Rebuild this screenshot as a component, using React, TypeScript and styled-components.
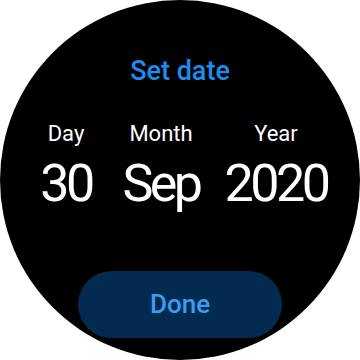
import React from "react";
import styled, { createGlobalStyle } from "styled-components";

const GlobalStyle = createGlobalStyle`
  html, body {
    margin: 0;
    padding: 0;
    background: #fff;
  }
  body {
    font-family: Roboto, "Noto Sans", sans-serif;
  }
`;

type Field = { label: string; value: string; width: number };

const fields: Field[] = [
  { label: "Day", value: "30", width: 80 },
  { label: "Month", value: "Sep", width: 110 },
  { label: "Year", value: "2020", width: 120 },
];

export default function App() {
  return (
    <>
      <GlobalStyle />
      <Watch>
        <Title>Set date</Title>
        <Picker>
          {fields.map((f) => (
            <Column key={f.label} $width={f.width}>
              <Label>{f.label}</Label>
              <Value>{f.value}</Value>
            </Column>
          ))}
        </Picker>
        <DoneButton>Done</DoneButton>
      </Watch>
    </>
  );
}

const Watch = styled.div`
  width: 360px;
  height: 360px;
  border-radius: 50%;
  background: #000;
  overflow: hidden;
  display: flex;
  flex-direction: column;
  align-items: center;
  box-sizing: border-box;
  padding-top: 54px;
`;

const Title = styled.div`
  color: #1b8cf0;
  font-size: 27px;
  font-weight: 500;
  line-height: 34px;
`;

const Picker = styled.div`
  display: flex;
  justify-content: center;
  margin-top: 31px;
  padding-left: 2px;
`;

const Column = styled.div<{ $width: number }>`
  width: ${(p) => p.$width}px;
  display: flex;
  flex-direction: column;
  align-items: center;
`;

const Label = styled.div`
  color: #fff;
  font-size: 22px;
  line-height: 30px;
`;

const Value = styled.div`
  color: #fff;
  font-size: 52px;
  line-height: 62px;
  letter-spacing: -3.5px;
  margin-top: 4px;
`;

const DoneButton = styled.button`
  margin-top: 56px;
  width: 204px;
  height: 67px;
  flex-shrink: 0;
  border: none;
  border-radius: 34px;
  background: #022b4f;
  color: #3d9cf0;
  font-family: Roboto, "Noto Sans", sans-serif;
  font-size: 26px;
  font-weight: 500;
  padding-bottom: 2px;
`;
